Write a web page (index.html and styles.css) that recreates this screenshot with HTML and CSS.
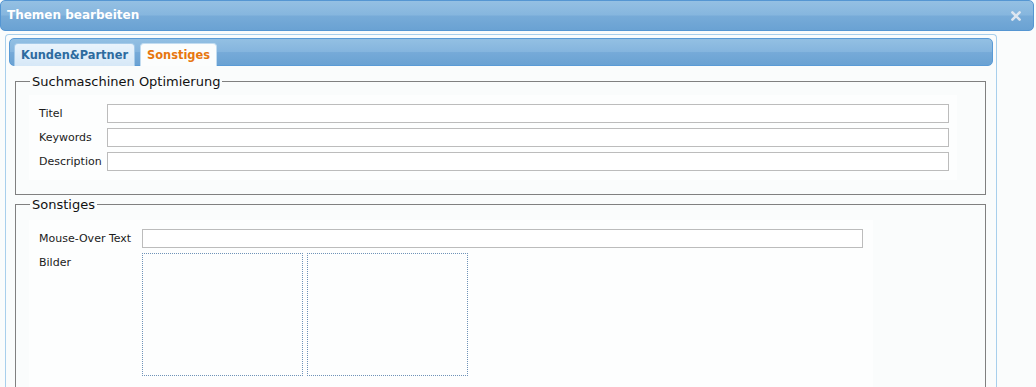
FILE: index.html
```html
<!DOCTYPE html>
<html lang="de">
<head>
<meta charset="utf-8">
<title>Themen bearbeiten</title>
<link rel="stylesheet" href="styles.css">
</head>
<body>
<div class="window">
  <div class="titlebar">
    <span class="title">Themen bearbeiten</span>
    <svg class="close" width="12" height="12" viewBox="0 0 12 12" aria-label="Schließen">
      <path d="M2.4 2.4 L9.6 9.6 M9.6 2.4 L2.4 9.6" stroke="#dde6f0" stroke-width="2.6" stroke-linecap="round"/>
    </svg>
  </div>
  <div class="panel">
    <div class="tabbar">
      <div class="tab">Kunden&amp;Partner</div>
      <div class="tab active">Sonstiges</div>
    </div>
    <div class="content">
      <fieldset class="fs fs-seo">
        <legend>Suchmaschinen Optimierung</legend>
        <div class="form form-seo">
          <label class="lbl">Titel</label><input class="inp" type="text">
          <label class="lbl">Keywords</label><input class="inp" type="text">
          <label class="lbl">Description</label><input class="inp" type="text">
        </div>
      </fieldset>
      <fieldset class="fs fs-misc">
        <legend>Sonstiges</legend>
        <div class="form form-misc">
          <label class="lbl">Mouse-Over Text</label><input class="inp" type="text">
          <label class="lbl lbl-top">Bilder</label>
          <div class="pics">
            <div class="pic"></div>
            <div class="pic"></div>
          </div>
        </div>
      </fieldset>
    </div>
  </div>
</div>
</body>
</html>
```

FILE: styles.css
```css
html, body {
  margin: 0;
  padding: 0;
  background: #fafcfc;
}

.window {
  width: 1036px;
  height: 387px;
  overflow: hidden;
  font-family: "DejaVu Sans", Verdana, sans-serif;
}

.titlebar {
  box-sizing: border-box;
  width: 1034px;
  height: 31px;
  border: 1px solid #5596d2;
  border-radius: 5px;
  background: linear-gradient(#94c0e3 0%, #86b6de 48%, #77abd8 52%, #6aa2d3 100%);
  display: flex;
  align-items: center;
  justify-content: space-between;
  padding: 0 11px 0 6px;
}

.title {
  color: #ffffff;
  font-weight: bold;
  font-size: 12px;
  line-height: 15px;
}

.close {
  display: block;
}

.panel {
  box-sizing: border-box;
  margin: 3px 0 0 5px;
  width: 992px;
  height: 353px;
  overflow: hidden;
  border: 1px solid #a8cfec;
  border-bottom: none;
  border-radius: 4px 4px 0 0;
  padding: 3px;
  background: #fafcfc;
}

.tabbar {
  box-sizing: border-box;
  height: 28px;
  border: 1px solid #5a9bd6;
  border-radius: 5px;
  background: linear-gradient(#93c0e3 0%, #85b5de 48%, #76aad8 52%, #6aa2d3 100%);
  display: flex;
  align-items: flex-end;
  gap: 5px;
  padding: 0 4px;
}

.tab {
  box-sizing: border-box;
  height: 23px;
  margin-bottom: -1px;
  padding: 0 6px;
  border: 1px solid #a6cbe9;
  border-bottom: none;
  border-radius: 4px 4px 0 0;
  font-weight: bold;
  font-size: 11.4px;
  line-height: 22px;
  color: #2d6b9f;
  background: linear-gradient(#eaf4fc, #d6e8f7);
}

.tab.active {
  color: #e7770f;
  background: #fbfdfd;
  border-color: #c2dcf0;
}

.content {
  padding: 8px 7px 0 6px;
}

.fs {
  margin: 0;
  border: 1px solid #808080;
  min-width: 0;
}

.fs legend {
  margin-left: 1px;
  padding: 0 2px;
  font-size: 13px;
  line-height: 15px;
  color: #111111;
}

.fs-seo {
  padding: 6px 28px 14px 13px;
}

.fs-misc {
  margin-top: 2px;
  padding: 8px 112px 0 13px;
}

.form {
  display: grid;
  align-items: center;
  background: #fdfefe;
}

.form-seo {
  grid-template-columns: 68px 1fr;
  row-gap: 5px;
  padding: 9px 8px 9px 10px;
}

.form-misc {
  grid-template-columns: 103px 1fr;
  row-gap: 5px;
  padding: 9px 10px 14px 10px;
}

.lbl {
  font-size: 11px;
  line-height: 19px;
  color: #1b1b1b;
}

.lbl-top {
  align-self: start;
}

.inp {
  box-sizing: border-box;
  height: 19px;
  margin: 0;
  border: 1px solid #bcbcbc;
  background: #ffffff;
  width: 100%;
}

.pics {
  display: flex;
  gap: 4px;
}

.pic {
  box-sizing: border-box;
  width: 161px;
  height: 123px;
  border: 1px dotted #6f93b8;
}
```
